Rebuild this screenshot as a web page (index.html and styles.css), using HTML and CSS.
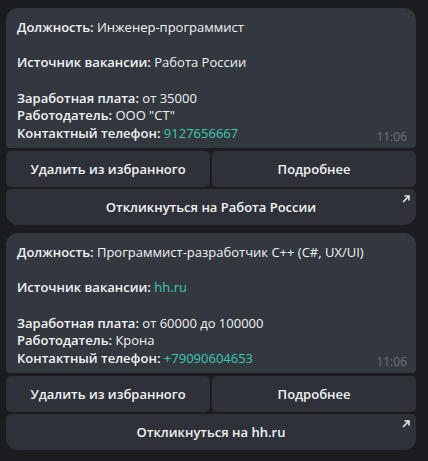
FILE: index.html
```html
<!DOCTYPE html>
<html lang="ru">
<head>
    <meta charset="UTF-8">
    <meta name="viewport" content="width=device-width, initial-scale=1.0">
    <title>Избранные вакансии</title>
    <link rel="stylesheet" href="styles.css">
</head>
<body>

    <div class="chat">
        <!-- Вакансия 1 -->
        <div class="message">
            <div class="bubble">
                <div class="line"><b>Должность:</b> Инженер-программист</div>
                <div class="line empty"></div>
                <div class="line"><b>Источник вакансии:</b> Работа России</div>
                <div class="line empty"></div>
                <div class="line"><b>Заработная плата:</b> от 35000</div>
                <div class="line"><b>Работодатель:</b> ООО "СТ"</div>
                <div class="line"><b>Контактный телефон:</b> <a class="link">9127656667</a></div>
                <span class="time">11:06</span>
            </div>
            <div class="keyboard">
                <div class="row">
                    <div class="btn">Удалить из избранного</div>
                    <div class="btn">Подробнее</div>
                </div>
                <div class="row">
                    <div class="btn last">Откликнуться на Работа России
                        <svg class="arrow" width="8" height="8" viewBox="0 0 8 8"><path d="M1 7 L6.5 1.5 M2.5 1 H7 V5.5" stroke="#e6e8eb" stroke-width="1.6" fill="none"/></svg>
                    </div>
                </div>
            </div>
        </div>

        <!-- Вакансия 2 -->
        <div class="message">
            <div class="bubble">
                <div class="line"><b>Должность:</b> Программист-разработчик C++ (C#, UX/UI)</div>
                <div class="line empty"></div>
                <div class="line"><b>Источник вакансии:</b> <a class="link">hh.ru</a></div>
                <div class="line empty"></div>
                <div class="line"><b>Заработная плата:</b> от 60000 до 100000</div>
                <div class="line"><b>Работодатель:</b> Крона</div>
                <div class="line"><b>Контактный телефон:</b> <a class="link">+79090604653</a></div>
                <span class="time">11:06</span>
            </div>
            <div class="keyboard">
                <div class="row">
                    <div class="btn">Удалить из избранного</div>
                    <div class="btn">Подробнее</div>
                </div>
                <div class="row">
                    <div class="btn last">Откликнуться на hh.ru
                        <svg class="arrow" width="8" height="8" viewBox="0 0 8 8"><path d="M1 7 L6.5 1.5 M2.5 1 H7 V5.5" stroke="#e6e8eb" stroke-width="1.6" fill="none"/></svg>
                    </div>
                </div>
            </div>
        </div>
    </div>

</body>
</html>
```

FILE: styles.css
```css
/* General Styles */
body {
    font-family: "Open Sans", sans-serif;
    background-color: #1b1c20;
    color: #f2f3f5;
    margin: 0;
    padding: 0;
}

.chat {
    width: 410px;
    padding: 8px 0 0 6px;
    display: flex;
    flex-direction: column;
    gap: 8px;
}

/* Message bubble */
.bubble {
    position: relative;
    background-color: #33373e;
    border-radius: 12px 12px 4px 4px;
    padding: 11px 11px 5px 11px;
    font-size: 13px;
    line-height: 17.7px;
}

.line b {
    font-weight: 600;
}

.line.empty {
    height: 17.7px;
}

.link {
    color: #3ccbb6;
}

.time {
    position: absolute;
    right: 9px;
    bottom: 2px;
    font-size: 12px;
    color: #6b7580;
}

/* Inline keyboard */
.keyboard {
    display: flex;
    flex-direction: column;
    gap: 2px;
    margin-top: 3px;
}

.row {
    display: flex;
    gap: 2px;
}

.btn {
    position: relative;
    flex: 1;
    height: 36px;
    display: flex;
    align-items: center;
    justify-content: center;
    background-color: #2e3138;
    border-radius: 5px;
    font-size: 13px;
    font-weight: 600;
    color: #f2f3f5;
}

.btn.last {
    border-radius: 5px 5px 12px 12px;
}

.arrow {
    position: absolute;
    top: 6px;
    right: 6px;
}
```
